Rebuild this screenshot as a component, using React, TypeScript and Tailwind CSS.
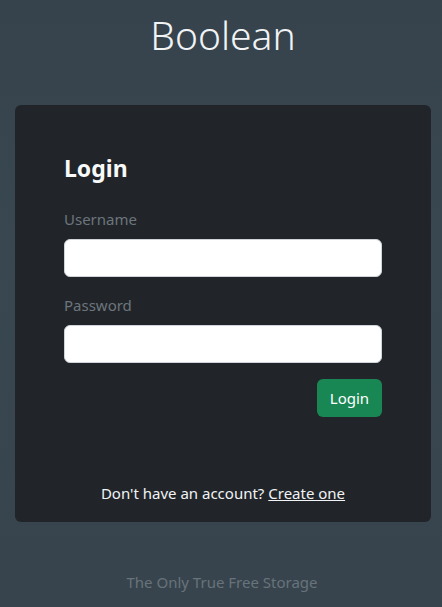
export default function App() {
  return (
    <div
      className="min-h-[607px] w-full bg-[linear-gradient(180deg,#36434c_0%,#394750_40%,#37444d_100%)] text-white"
      style={{ fontFamily: '"Noto Sans", "Open Sans", sans-serif' }}
    >
      <div className="pl-[4px] pt-[11px]">
        <h1 className="text-center text-[39px] font-light leading-[48px] text-[#f1f3f5]">Boolean</h1>
      </div>
      <div className="ml-[15px] mr-[11px] mt-[46px] rounded-md bg-[#212529] px-[49px] pt-[49px] pb-[17px]">
        <h2 className="text-[23px] font-bold leading-[29px] text-[#f8f9fa]">Login</h2>
        <form className="mt-[24px]" onSubmit={(e) => e.preventDefault()}>
          <label className="block text-[15px] leading-[24px] text-[#6c757d]">Username</label>
          <input
            type="text"
            className="mt-2 block h-[38px] w-full rounded-[6px] border border-[#ced4da] bg-white px-3 text-black outline-none"
          />
          <label className="mt-4 block text-[15px] leading-[24px] text-[#6c757d]">Password</label>
          <input
            type="password"
            className="mt-2 block h-[38px] w-full rounded-[6px] border border-[#ced4da] bg-white px-3 text-black outline-none"
          />
          <div className="mt-4 flex justify-end">
            <button
              type="submit"
              className="h-[38px] w-[65px] rounded-[6px] bg-[#198754] text-[15px] leading-[24px] text-white"
            >
              Login
            </button>
          </div>
        </form>
        <p className="mt-[64px] text-center text-[15px] leading-[24px] text-[#f1f3f5]">
          Don't have an account? <a href="#" className="underline">Create one</a>
        </p>
      </div>
      <p className="mt-[48px] pl-[2px] text-center text-[15px] leading-[24px] text-[#68737b]">The Only True Free Storage</p>
    </div>
  );
}
